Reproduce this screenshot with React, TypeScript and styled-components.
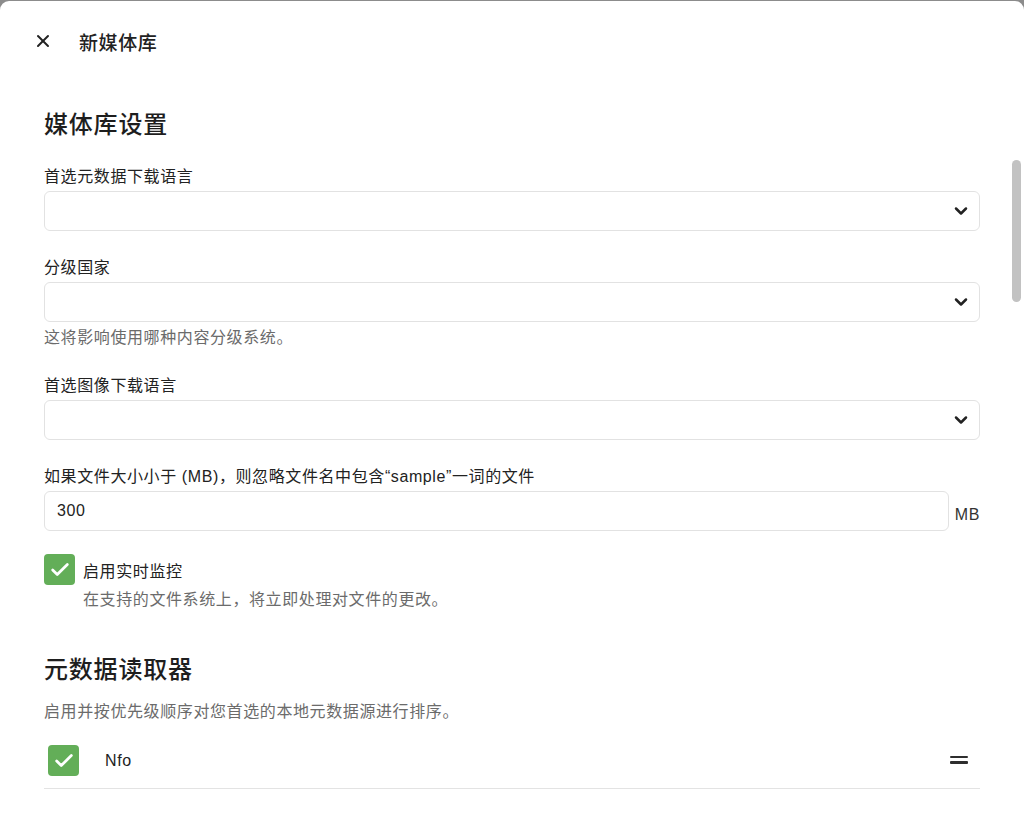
import React from 'react';
import styled, { createGlobalStyle } from 'styled-components';
import { X, ChevronDown, Check } from 'lucide-react';

const GlobalStyle = createGlobalStyle`
  html, body {
    margin: 0;
    padding: 0;
    background: #8c8c8c;
    height: 100%;
    overflow: hidden;
  }
  body {
    font-family: "Liberation Sans", "Noto Sans CJK SC", sans-serif;
    letter-spacing: 0.6px;
    color: #222;
  }
`;

const Dialog = styled.div`
  position: relative;
  margin-top: 1px;
  height: 823px;
  background: #fff;
  border-radius: 9px 9px 0 0;
  overflow: hidden;
  box-sizing: border-box;
`;

const Header = styled.div`
  display: flex;
  align-items: center;
  height: 80px;
  padding: 0 0 0 33px;
  box-sizing: border-box;
  gap: 26px;
`;

const CloseButton = styled.button`
  background: none;
  border: none;
  padding: 0;
  width: 20px;
  height: 20px;
  display: flex;
  align-items: center;
  justify-content: center;
  color: #222;
  cursor: pointer;
`;

const Title = styled.h1`
  margin: 0;
  font-size: 19px;
  font-weight: 500;
  color: #222;
`;

const Content = styled.div`
  padding: 28px 44px 0 44px;
  width: 936px;
`;

const SectionTitle = styled.h2<{ $gap?: number }>`
  margin: 0 0 ${(p) => p.$gap ?? 24}px 0;
  font-size: 24px;
  line-height: 32px;
  font-weight: 500;
  letter-spacing: 0.8px;
  color: #1e1e1e;
`;

const Field = styled.div<{ $gap?: number }>`
  margin-bottom: ${(p) => p.$gap ?? 25}px;
`;

const Label = styled.div`
  font-size: 16px;
  line-height: 24px;
  margin-bottom: 2px;
  color: #222;
`;

const Hint = styled.div<{ $indent?: number; $top?: number }>`
  font-size: 16px;
  line-height: 24px;
  margin-top: ${(p) => p.$top ?? 5}px;
  padding-left: ${(p) => p.$indent ?? 0}px;
  color: #6b6b6b;
`;

const SelectBox = styled.div`
  height: 40px;
  box-sizing: border-box;
  border: 1px solid #e2e2e2;
  border-radius: 6px;
  display: flex;
  align-items: center;
  justify-content: flex-end;
  padding-right: 8px;
  color: #222;
`;

const InputRow = styled.div`
  display: flex;
  align-items: center;
  gap: 6px;
`;

const TextInput = styled.div`
  flex: 1;
  height: 40px;
  box-sizing: border-box;
  border: 1px solid #e2e2e2;
  border-radius: 6px;
  display: flex;
  align-items: center;
  padding-left: 12px;
  font-size: 16px;
  color: #222;
`;

const Unit = styled.span`
  font-size: 16px;
  color: #333;
  padding-top: 8px;
`;

const CheckRow = styled.div<{ $indent?: number; $gap?: number }>`
  display: flex;
  align-items: center;
  gap: ${(p) => p.$gap ?? 8}px;
  padding-left: ${(p) => p.$indent ?? 0}px;
`;

const CheckBox = styled.span<{ $size?: number }>`
  width: ${(p) => p.$size ?? 31}px;
  height: ${(p) => p.$size ?? 31}px;
  background: #63ae58;
  border-radius: 4px;
  display: flex;
  align-items: center;
  justify-content: center;
  color: #fff;
  flex-shrink: 0;
`;

const CheckLabel = styled.span`
  font-size: 16px;
  color: #222;
`;

const MonitorBlock = styled.div`
  margin-top: 23px;
  margin-bottom: 42px;
`;

const SectionHint = styled.div`
  font-size: 16px;
  line-height: 24px;
  color: #6b6b6b;
  margin-bottom: 21px;
`;

const ReaderRow = styled.div`
  display: flex;
  align-items: center;
  justify-content: space-between;
  padding: 0 12px 12px 0;
  border-bottom: 1px solid #e3e3e3;
`;

const Handle = styled.span`
  display: flex;
  flex-direction: column;
  gap: 3px;
  width: 18px;
  margin-top: -2px;
  & > i {
    display: block;
    height: 2.5px;
    background: #2e2e2e;
    border-radius: 1px;
  }
`;

const ScrollThumb = styled.div`
  position: absolute;
  right: 3px;
  top: 159px;
  width: 9px;
  height: 142px;
  border-radius: 5px;
  background: #c2c2c2;
`;

const Select: React.FC = () => (
  <SelectBox>
    <ChevronDown size={20} strokeWidth={3} />
  </SelectBox>
);

export default function App() {
  return (
    <>
      <GlobalStyle />
      <Dialog>
        <Header>
          <CloseButton aria-label="close">
            <X size={22} strokeWidth={2.4} />
          </CloseButton>
          <Title>新媒体库</Title>
        </Header>
        <Content>
          <SectionTitle>媒体库设置</SectionTitle>
          <Field>
            <Label>首选元数据下载语言</Label>
            <Select />
          </Field>
          <Field $gap={24}>
            <Label>分级国家</Label>
            <Select />
            <Hint $top={4}>这将影响使用哪种内容分级系统。</Hint>
          </Field>
          <Field>
            <Label>首选图像下载语言</Label>
            <Select />
          </Field>
          <div>
            <Label>如果文件大小小于 (MB)，则忽略文件名中包含“sample”一词的文件</Label>
            <InputRow>
              <TextInput>300</TextInput>
              <Unit>MB</Unit>
            </InputRow>
          </div>
          <MonitorBlock>
            <CheckRow>
              <CheckBox>
                <Check size={22} strokeWidth={3} />
              </CheckBox>
              <CheckLabel>启用实时监控</CheckLabel>
            </CheckRow>
            <Hint $indent={39} $top={3}>在支持的文件系统上，将立即处理对文件的更改。</Hint>
          </MonitorBlock>
          <SectionTitle $gap={14}>元数据读取器</SectionTitle>
          <SectionHint>启用并按优先级顺序对您首选的本地元数据源进行排序。</SectionHint>
          <ReaderRow>
            <CheckRow $indent={4} $gap={26}>
              <CheckBox $size={31}>
                <Check size={22} strokeWidth={3} />
              </CheckBox>
              <CheckLabel>Nfo</CheckLabel>
            </CheckRow>
            <Handle>
              <i />
              <i />
            </Handle>
          </ReaderRow>
        </Content>
        <ScrollThumb />
      </Dialog>
    </>
  );
}
